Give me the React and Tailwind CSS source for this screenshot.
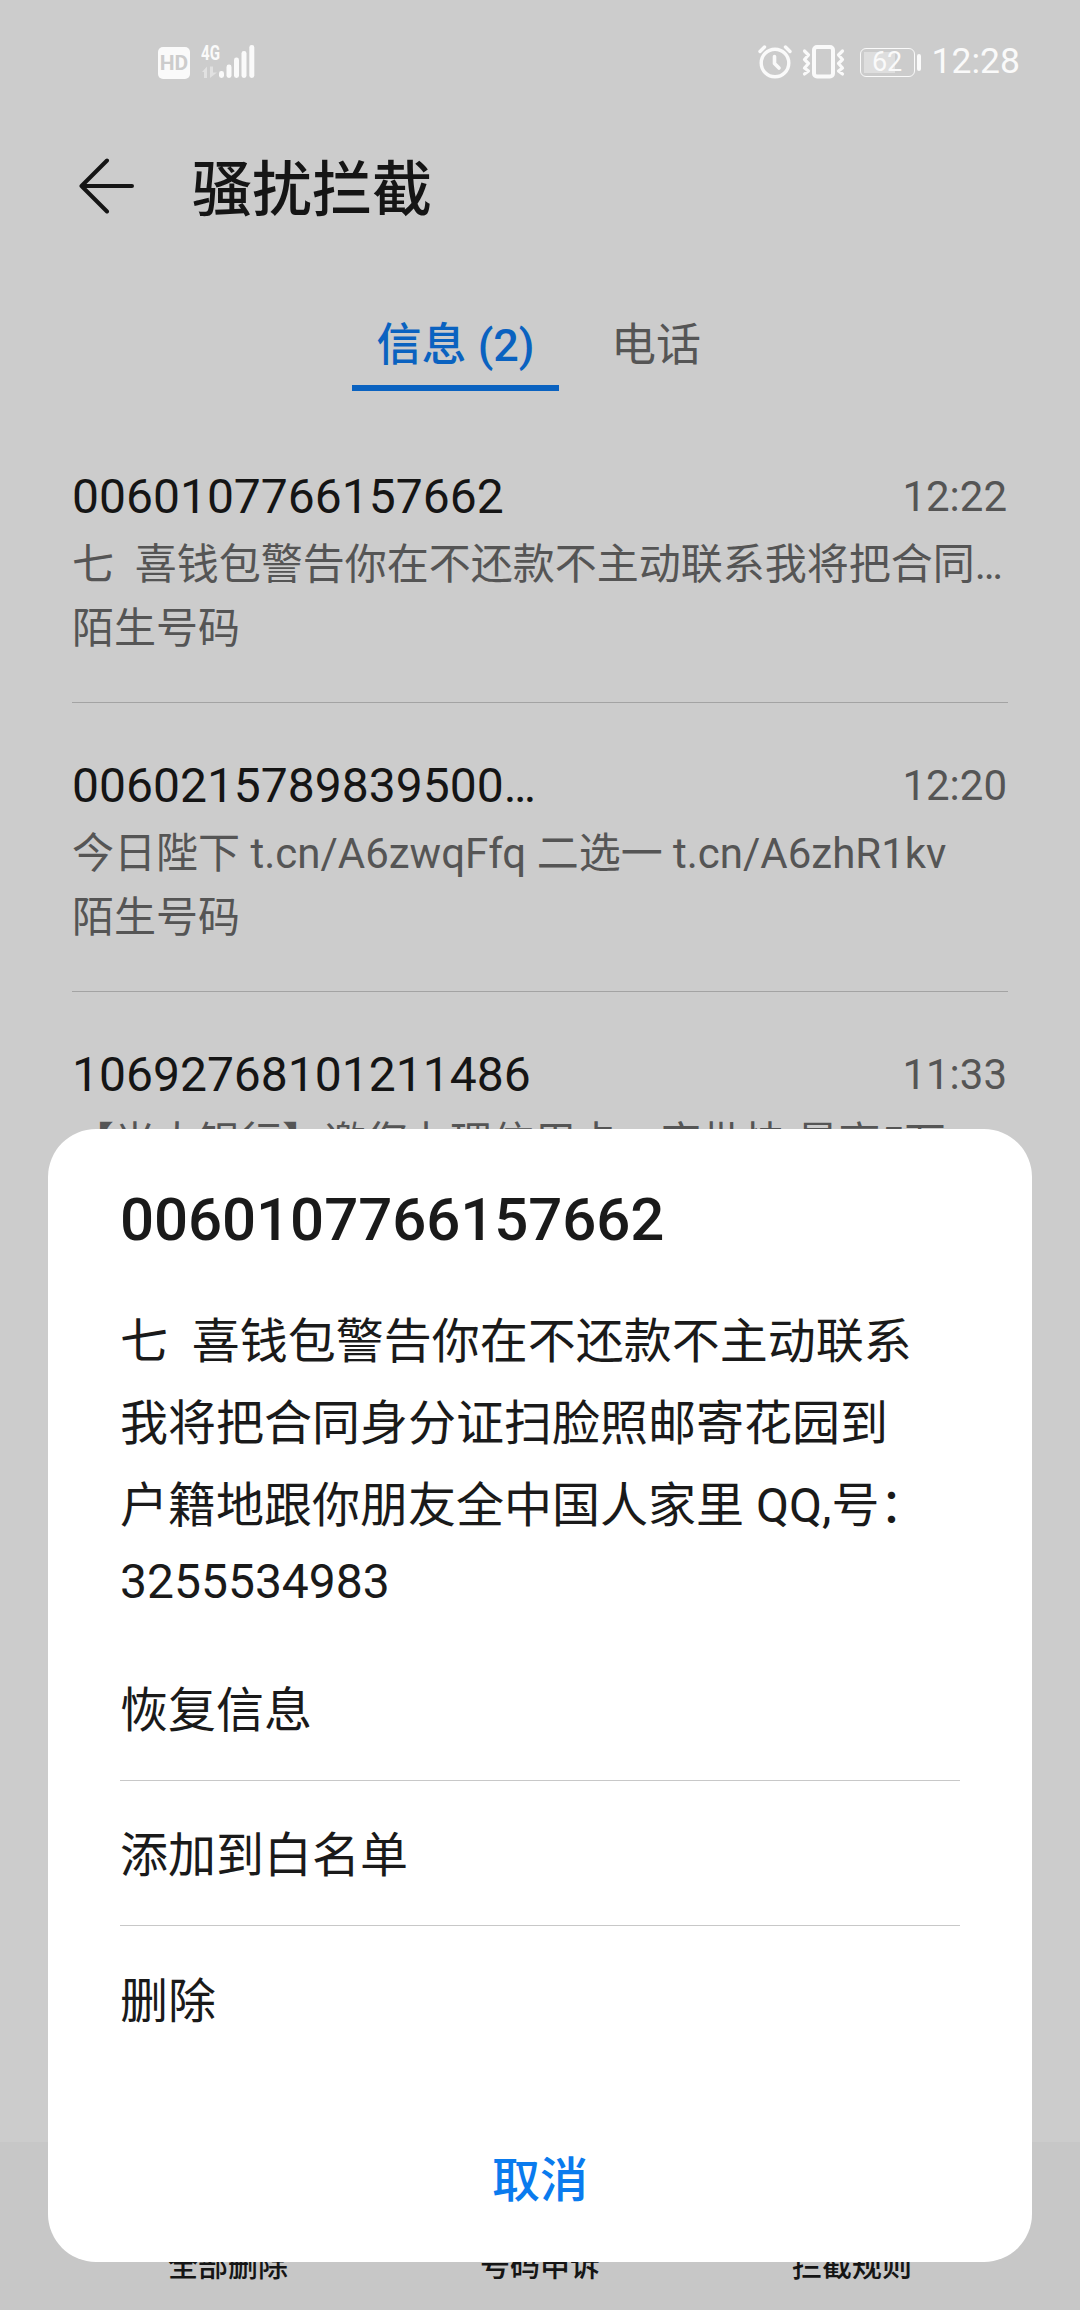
const CALLS = [
  { number: '0060107766157662', time: '12:22', text: '七\u00a0 喜钱包警告你在不还款不主动联系我将把合同…', tag: '陌生号码' },
  { number: '0060215789839500…', time: '12:20', text: '今日陛下 t.cn/A6zwqFfq 二选一 t.cn/A6zhR1kv', tag: '陌生号码' },
  { number: '10692768101211486', time: '11:33', text: '【光大银行】邀您办理信用卡，审批快 最高5万', tag: '陌生号码' },
];

const ACTIONS = ['恢复信息', '添加到白名单', '删除'];
const TOOLS = ['全部删除', '号码申诉', '拦截规则'];

const BODY = [
  '七\u00a0 喜钱包警告你在不还款不主动联系',
  '我将把合同身分证扫脸照邮寄花园到',
  '户籍地跟你朋友全中国人家里 QQ,号：',
];

function SignalIcon() {
  return (
    <svg width="56" height="36" viewBox="0 0 56 36" fill="#fafafa">
      <text x="0" y="16" fontSize="21" fontWeight="700" textLength="19" lengthAdjust="spacingAndGlyphs">4G</text>
      <path d="M1 28l5-5.500v11.500h-3v-6zM9 22.500h3v6h4l-7 5.500z" opacity=".45" />
      <rect x="18" y="27" width="5" height="7" rx="2.400" />
      <rect x="25.500" y="20.500" width="5" height="13.500" rx="2.400" />
      <rect x="33" y="13.500" width="5" height="20.500" rx="2.400" />
      <rect x="40.500" y="7" width="5" height="27" rx="2.400" />
      <rect x="48.300" y="1" width="5" height="33" rx="2.400" />
    </svg>
  );
}

function AlarmIcon() {
  return (
    <svg width="34" height="34" viewBox="0 0 34 34" fill="none" stroke="#fafafa" strokeLinecap="round" strokeLinejoin="round">
      <circle cx="17" cy="18" r="13.800" strokeWidth="3.400" />
      <path d="M16.500 11.500v7l4.500 4.500" strokeWidth="3.600" />
      <path d="M2 6.500l4.500-4.500M27.500 2l4.500 4.500" strokeWidth="3.400" />
    </svg>
  );
}

function VibrateIcon() {
  return (
    <svg width="43" height="34" viewBox="0 0 43 34" fill="none" stroke="#fafafa" strokeLinecap="round" strokeLinejoin="round">
      <rect x="12" y="2" width="19" height="29.500" rx="3" strokeWidth="4" />
      <path d="M2.500 6l4 4-4 4.500 4 4-4 4.500 4 3-4 3M40.500 6l-4 4 4 4.500-4 4 4 4.500-4 3 4 3" strokeWidth="3.200" />
    </svg>
  );
}

function Battery({ level }) {
  return (
    <div className="flex items-center gap-[2px]">
      <div className="relative flex h-[29px] w-[55px] items-center justify-center rounded-[6px] border-[1.500px] border-[#fafafa]">
        <div className="absolute inset-y-[3px] left-[3px] bg-white/35" style={{ width: `${level * 0.5}px` }} />
        <span className="relative text-[27px] leading-none text-[#fafafa]">{level}</span>
      </div>
      <div className="h-[17px] w-[4px] rounded-full bg-[#fafafa]" />
    </div>
  );
}

function StatusBar() {
  return (
    <div className="flex h-[124px] items-start justify-between pr-[60px] pl-[158px]">
      <div className="mt-[44px] flex">
        <div className="mt-[3px] mr-[11px] flex size-[32px] items-center justify-center rounded-[5px] bg-[#fafafa] text-[21px] leading-none font-bold text-[#ccc]">HD</div>
        <SignalIcon />
      </div>
      <div className="mt-[45px] flex h-[34px] items-center">
        <AlarmIcon />
        <div className="ml-[10px]"><VibrateIcon /></div>
        <div className="ml-[15px]"><Battery level={62} /></div>
        <span className="ml-[11px] text-[35.500px] leading-none text-[#fafafa]">12:28</span>
      </div>
    </div>
  );
}

function CallRow({ call }) {
  return (
    <div className="h-[289px] border-b-1 border-[#a3a3a3] pt-[55px]">
      <div className="flex h-[56px] items-start justify-between">
        <span className="text-[48px] leading-[56px] text-[#151515]">{call.number}</span>
        <span className="pr-px text-[42px] leading-[56px]">{call.time}</span>
      </div>
      <p className="mt-[8px] text-[42px] leading-[64px] whitespace-nowrap">{call.text}</p>
      <p className="text-[42px] leading-[63px]">{call.tag}</p>
    </div>
  );
}

export default function App() {
  return (
    <div className="relative flex h-[2310px] w-[1080px] flex-col overflow-hidden bg-[#ccc] font-[Roboto,'Noto_Sans_CJK_SC',sans-serif] text-[#555]">
      <StatusBar />

      <header className="flex h-[124px] items-center pl-[79px]">
        <svg width="56" height="56" viewBox="0 0 56 56" fill="none" stroke="#151515" strokeWidth="4" strokeLinecap="round" strokeLinejoin="round">
          <path d="M53 28H2.500M28 2.500L2.500 28L28 53.500" />
        </svg>
        <h1 className="mt-[10px] ml-[57px] text-[60px] leading-none font-medium text-[#151515]">骚扰拦截</h1>
      </header>

      <nav className="mt-[45px] flex h-[98px] justify-center gap-[28px] pr-[3px] text-[45px]">
        <div className="h-[98px] w-[207px] border-b-[6px] border-[#0a62c0] pt-[20px] text-center leading-[66px] font-medium text-[#0a62c0]">信息 (2)</div>
        <div className="w-[138px] pt-[20px] text-center leading-[66px]">电话</div>
      </nav>

      <main className="h-[1751px] overflow-hidden px-[72px] pt-[23px]">
        {CALLS.map((c) => <CallRow key={c.number} call={c} />)}
      </main>

      <footer className="flex h-[168px] shrink-0 bg-[#c7c7c7] px-[72px] pt-[106px] text-[30px] leading-[36px] font-medium text-[#151515]">
        {TOOLS.map((t) => <span key={t} className="flex-1 text-center">{t}</span>)}
      </footer>

      <section className="absolute top-[1129px] left-[48px] h-[1133px] w-[984px] rounded-[48px] bg-white px-[72px] pt-[56px] text-[48px] text-[#1a1a1a]">
        <h2 className="text-[60px] leading-[70px] font-medium tracking-[-0.080px]">0060107766157662</h2>
        <div className="mt-[46px] leading-[82px]">
          {BODY.map((line) => <p key={line} className="whitespace-nowrap">{line}</p>)}
          <p className="leading-[70px]">3255534983</p>
        </div>
        <div className="mt-[19px]">
          {ACTIONS.map((a) => (
            <button key={a} className="block h-[145px] w-full border-b-1 border-[#c8c8c8] pt-[6px] text-left last:border-0">{a}</button>
          ))}
        </div>
        <button className="mt-[62px] block w-full text-center text-[48px] leading-[96px] font-medium text-[#0a7bee]">取消</button>
      </section>
    </div>
  );
}
